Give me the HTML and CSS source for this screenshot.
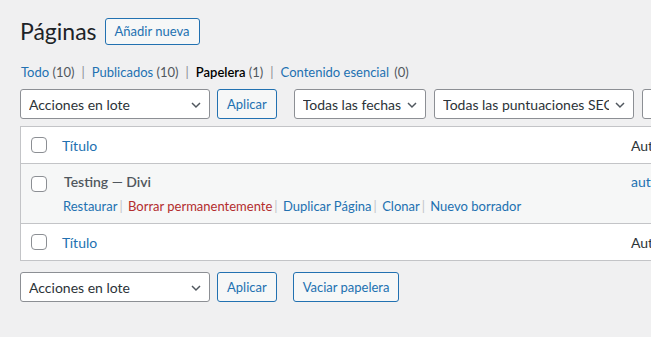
FILE: index.html
```html
<!DOCTYPE html>
<html lang="es">
<head>
    <meta charset="UTF-8">
    <title>Páginas</title>
    <link rel="stylesheet" href="styles.css">
</head>
<body>
    <div class="wrap">
        <div class="title-bar">
            <h1>Páginas</h1>
            <a class="page-title-action" href="#">Añadir nueva</a>
        </div>

        <ul class="subsubsub">
            <li><a href="#">Todo <span class="count">(10)</span></a><span class="sep">|</span></li>
            <li><a href="#">Publicados <span class="count">(10)</span></a><span class="sep">|</span></li>
            <li><a href="#" class="current">Papelera <span class="count">(1)</span></a><span class="sep">|</span></li>
            <li><a href="#">Contenido esencial</a> <span class="count extra">(0)</span></li>
        </ul>

        <div class="tablenav">
            <div class="select bulk">
                <span>Acciones en lote</span>
                <svg viewBox="0 0 20 20"><path d="M5 7.5 L10 12.5 L15 7.5"/></svg>
            </div>
            <button class="button">Aplicar</button>
            <div class="filters">
                <div class="select">
                    <span>Todas las fechas</span>
                    <svg viewBox="0 0 20 20"><path d="M5 7.5 L10 12.5 L15 7.5"/></svg>
                </div>
                <div class="select narrow">
                    <span>Todas las puntuaciones SEO</span>
                    <svg viewBox="0 0 20 20"><path d="M5 7.5 L10 12.5 L15 7.5"/></svg>
                </div>
                <div class="select narrow">
                    <span>Todas las puntuaciones de legibilidad</span>
                    <svg viewBox="0 0 20 20"><path d="M5 7.5 L10 12.5 L15 7.5"/></svg>
                </div>
            </div>
        </div>

        <div class="list-table">
            <div class="list-row head">
                <div class="check-col"><span class="checkbox"></span></div>
                <div class="title-col"><a href="#">Título</a></div>
                <div class="author-col">Autor</div>
            </div>
            <div class="list-row item">
                <div class="check-col"><span class="checkbox"></span></div>
                <div class="title-col">
                    <strong class="row-title">Testing — Divi</strong>
                    <div class="row-actions">
                        <a href="#">Restaurar</a><span class="sep">|</span>
                        <a href="#" class="delete">Borrar permanentemente</a><span class="sep">|</span>
                        <a href="#">Duplicar Página</a><span class="sep">|</span>
                        <a href="#">Clonar</a><span class="sep">|</span>
                        <a href="#">Nuevo borrador</a>
                    </div>
                </div>
                <div class="author-col"><a href="#">autor</a></div>
            </div>
            <div class="list-row foot">
                <div class="check-col"><span class="checkbox"></span></div>
                <div class="title-col"><a href="#">Título</a></div>
                <div class="author-col">Autor</div>
            </div>
        </div>

        <div class="tablenav bottom">
            <div class="select bulk">
                <span>Acciones en lote</span>
                <svg viewBox="0 0 20 20"><path d="M5 7.5 L10 12.5 L15 7.5"/></svg>
            </div>
            <button class="button">Aplicar</button>
            <button class="button empty">Vaciar papelera</button>
        </div>
    </div>
</body>
</html>
```

FILE: styles.css
```css
body {
    margin: 0;
    background: #f0f0f1;
    color: #3c434a;
    font-family: Lato, "Liberation Sans", sans-serif;
    font-size: 13px;
    overflow: hidden;
}

a {
    color: #2271b1;
    text-decoration: none;
}

.wrap {
    width: 1000px;
    padding: 16px 0 0 20px;
}

.title-bar {
    display: flex;
    align-items: center;
    gap: 8px;
    height: 30px;
}

h1 {
    margin: 0;
    font-size: 23px;
    font-weight: 400;
    line-height: 30px;
    color: #1d2327;
}

.page-title-action {
    display: inline-flex;
    align-items: center;
    height: 25px;
    padding: 0 9px;
    border: 1px solid #2271b1;
    border-radius: 3px;
    background: #f6f7f7;
    font-size: 13px;
}

.subsubsub {
    display: flex;
    margin: 16px 0 0;
    padding: 0 0 0 1px;
    list-style: none;
    line-height: 20px;
    color: #646970;
}

.subsubsub .count {
    color: #50575e;
}

.subsubsub .count.extra {
    margin-left: 2px;
}

.subsubsub .current {
    color: #000;
    font-weight: 600;
}

.subsubsub .current .count {
    font-weight: 400;
    color: #50575e;
}

.subsubsub .sep {
    margin: 0 7px;
    color: #8c8f94;
}

.tablenav {
    display: flex;
    align-items: center;
    margin-top: 7px;
    height: 30px;
}

.tablenav.bottom {
    margin-top: 11px;
}

.filters {
    display: flex;
    gap: 8px;
    margin-left: 17px;
}

.select {
    position: relative;
    box-sizing: border-box;
    display: flex;
    align-items: center;
    height: 30px;
    padding: 0 24px 0 8px;
    border: 1px solid #8c8f94;
    border-radius: 3px;
    background: #fff;
    color: #2c3338;
    font-size: 14px;
    white-space: nowrap;
    overflow: hidden;
    flex-shrink: 0;
}

.select.bulk {
    width: 190px;
}

.select.narrow {
    max-width: 200px;
}

.select span {
    overflow: hidden;
}

.select svg {
    position: absolute;
    right: 5px;
    top: 7px;
    width: 16px;
    height: 16px;
    fill: none;
    stroke: #50575e;
    stroke-width: 1.8;
}

.button {
    box-sizing: border-box;
    height: 30px;
    margin-left: 7px;
    padding: 0 9px;
    border: 1px solid #2271b1;
    border-radius: 3px;
    background: #f6f7f7;
    color: #2271b1;
    font-family: inherit;
    font-size: 13px;
}

.button.empty {
    margin-left: 16px;
}

.list-table {
    margin-top: 7px;
    border: 1px solid #c3c4c7;
    background: #fff;
}

.list-row {
    display: grid;
    grid-template-columns: 33px 569px 1fr;
}

.list-row.head {
    height: 36px;
    border-bottom: 1px solid #c3c4c7;
    align-items: center;
    font-size: 14px;
}

.list-row.foot {
    height: 36px;
    border-top: 1px solid #c3c4c7;
    align-items: center;
    font-size: 14px;
}

.list-row.item {
    background: #f6f7f7;
    height: 59px;
}

.check-col {
    padding-left: 10px;
    display: flex;
    align-items: center;
}

.item .check-col {
    align-items: flex-start;
    padding-top: 12px;
}

.checkbox {
    box-sizing: border-box;
    width: 16px;
    height: 16px;
    border: 1px solid #8c8f94;
    border-radius: 4px;
    background: #fff;
}

.title-col {
    padding-left: 8px;
}

.item .title-col {
    padding-top: 8px;
}

.row-title {
    display: block;
    font-size: 14px;
    line-height: 20px;
    font-weight: 600;
    color: #50575e;
    padding-left: 2px;
}

.row-actions {
    margin-top: 5px;
    line-height: 19px;
    font-size: 13px;
    padding-left: 1px;
}

.row-actions .delete {
    color: #b32d2e;
}

.row-actions .sep {
    margin: 0 2px;
    color: #c3c4c7;
}

.author-col {
    padding-left: 8px;
    color: #2c3338;
}

.item .author-col {
    padding-top: 8px;
    font-size: 14px;
    line-height: 20px;
}
```
